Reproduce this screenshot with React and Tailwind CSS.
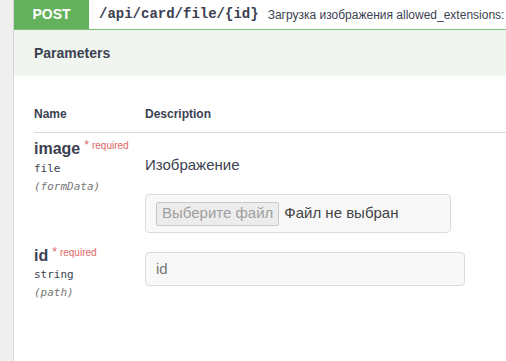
const sans = { fontFamily: '"Liberation Sans", Arial, sans-serif' };

export default function App() {
  return (
    <div className="flex h-[361px] w-[506px] overflow-hidden bg-[#efefef] font-['Liberation_Sans',Arial,sans-serif] text-[#3b4151]">
      <div className="w-[14px] shrink-0 border-r border-[#d6d6d6]" />
      <div className="flex min-w-0 flex-1 flex-col bg-white">
        {/* summary */}
        <div className="flex h-[30px] shrink-0 items-center overflow-hidden border-b border-[#7dbd77] bg-white">
          <div className="flex h-full w-[75px] shrink-0 items-center justify-center bg-[#63b15c] text-[14px] font-bold text-white">
            POST
          </div>
          <span className="ml-[10px] shrink-0 whitespace-nowrap font-['Liberation_Mono',monospace] text-[14px] font-bold text-[#3b4151]">
            /api/card/file/{'{id}'}
          </span>
          <span className="ml-[9px] whitespace-nowrap text-[12px] text-[#3b4151]">
            Загрузка изображения allowed_extensions:
          </span>
        </div>

        {/* section header */}
        <div className="flex h-[46px] shrink-0 items-center bg-[#f0f6ef] pl-[20px]">
          <span className="text-[14px] font-bold">Parameters</span>
        </div>

        {/* table */}
        <div className="pl-[20px] pt-[29px]">
          <div className="flex border-b border-[#dcdcdc] pb-[9px] text-[12px] font-bold">
            <div className="w-[111px]">Name</div>
            <div>Description</div>
          </div>

          <div className="flex pt-[6px]">
            <div className="w-[111px] shrink-0">
              <div className="flex items-start">
                <span className="text-[16px] font-bold leading-[20px]">image</span>
                <span className="ml-[4px] text-[10px] leading-[12px] text-[#e06666]">
                  <span className="mr-[3px] text-[12px]">*</span>required
                </span>
              </div>
              <div className="mt-[1px] font-['DejaVu_Sans_Mono',monospace] text-[11px] leading-[18px]">file</div>
              <div className="font-['DejaVu_Sans_Mono',monospace] text-[11px] italic leading-[18px] text-[#777]">
                (formData)
              </div>
            </div>
            <div className="flex-1">
              <div className="pt-[16px] text-[15px] leading-[20px]" style={sans}>
                Изображение
              </div>
              <div className="mt-[19px] flex h-[39px] w-[306px] items-center rounded-[4px] border border-[#dcdcdc] bg-[#f8f8f8] pl-[10px]">
                <div className="flex h-[24px] items-center rounded-[2px] border border-[#c8c8c8] bg-[#ececec] px-[5px] text-[15px] text-[#a0a0a0]">
                  Выберите файл
                </div>
                <span className="ml-[5px] text-[15px] text-[#444]">Файл не выбран</span>
              </div>
            </div>
          </div>

          <div className="flex pt-[13px]">
            <div className="w-[111px] shrink-0">
              <div className="flex items-start">
                <span className="text-[16px] font-bold leading-[20px]">id</span>
                <span className="ml-[4px] text-[10px] leading-[12px] text-[#e06666]">
                  <span className="mr-[3px] text-[12px]">*</span>required
                </span>
              </div>
              <div className="font-['DejaVu_Sans_Mono',monospace] text-[11px] leading-[18px]">string</div>
              <div className="font-['DejaVu_Sans_Mono',monospace] text-[11px] italic leading-[18px] text-[#777]">
                (path)
              </div>
            </div>
            <div className="flex-1 pt-[6px]">
              <div className="flex h-[34px] w-[320px] items-center rounded-[4px] border border-[#dcdcdc] bg-[#f8f8f8] pl-[10px] text-[15px] text-[#777]">
                id
              </div>
            </div>
          </div>
        </div>
      </div>
    </div>
  );
}
